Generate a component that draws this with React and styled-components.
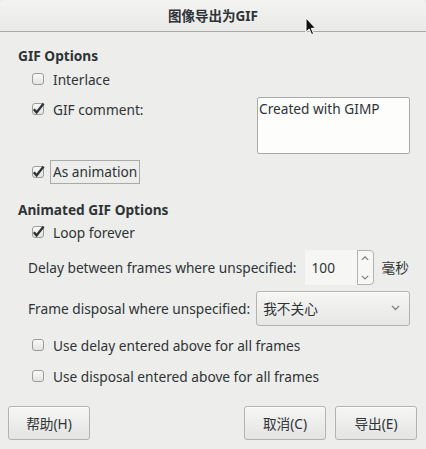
import React from 'react';
import styled, { createGlobalStyle } from 'styled-components';

const GlobalStyle = createGlobalStyle`
  html, body {
    margin: 0;
    padding: 0;
    background: #ededeb;
  }
  * { box-sizing: border-box; }
`;

const Window = styled.div`
  position: relative;
  width: 426px;
  height: 449px;
  display: flex;
  flex-direction: column;
  background: #ededeb;
  color: #2e3436;
  font-family: "Noto Sans", "Noto Sans CJK SC", sans-serif;
  font-size: 13.7px;
  overflow: hidden;
`;

const TitleBar = styled.div`
  height: 32px;
  flex: none;
  display: flex;
  align-items: center;
  justify-content: center;
  background: linear-gradient(#f3f3f2, #e9e9e7);
  border-bottom: 1px solid #a9a9a6;
  border-radius: 5px 5px 0 0;
  font-weight: bold;
  font-size: 13.5px;
  padding-bottom: 1px;
`;

const Content = styled.div`
  flex: 1;
  display: flex;
  flex-direction: column;
  padding: 15px 16px 0 18px;
`;

const Heading = styled.div`
  height: 18px;
  line-height: 18px;
  font-weight: bold;
  margin-top: ${p => p.gap || 0}px;
`;

const Row = styled.div`
  display: flex;
  align-items: ${p => p.top ? 'flex-start' : 'center'};
  height: ${p => p.h}px;
  padding-left: ${p => p.indent ?? 13}px;
`;

const CheckLabel = styled.label`
  display: flex;
  align-items: center;
  gap: 8px;
  height: ${p => p.h || 'auto'};
`;

const LabelText = styled.span`
  padding: 2px 2px;
  border: 1px solid ${p => p.focused ? '#a9a9a6' : 'transparent'};
  margin-left: -3px;
  line-height: 18px;
`;

const Spacer = styled.div`
  flex: 1;
`;

const CommentBox = styled.div`
  width: 153px;
  height: 57px;
  margin-top: 4px;
  background: #fdfdfc;
  border: 1px solid #a9a9a6;
  border-radius: 2px;
  padding: 2px 1px;
  line-height: 18px;
`;

const FieldLabel = styled.span`
  margin-right: ${p => p.gap}px;
`;

const Spin = styled.div`
  display: flex;
  height: 35px;
`;

const SpinValue = styled.div`
  width: 52px;
  background: #f6f6f5;
  display: flex;
  align-items: center;
  padding-left: 7px;
`;

const SpinButtons = styled.div`
  width: 17px;
  display: flex;
  flex-direction: column;
  align-items: center;
  justify-content: space-between;
  padding: 5px 0 4px;
  background: #f7f7f6;
  border: 1px solid #b3b3b0;
  border-radius: 0 4px 4px 0;
`;

const Unit = styled.span`
  margin-left: 8px;
`;

const Combo = styled.div`
  flex: 1;
  height: 35px;
  display: flex;
  align-items: center;
  justify-content: space-between;
  padding: 0 9px 0 6px;
  border: 1px solid #b3b3b0;
  border-radius: 3px;
  background: linear-gradient(#f6f6f5, #e6e6e4);
  box-shadow: 0 1px 0 rgba(255,255,255,0.7) inset;
`;

const Footer = styled.div`
  flex: none;
  display: flex;
  gap: 9px;
  padding: 0 9px 9px 8px;
`;

const Button = styled.div`
  width: 82px;
  height: 34px;
  display: flex;
  align-items: center;
  justify-content: center;
  border: 1px solid #b3b3b0;
  border-radius: 3px;
  background: linear-gradient(#f6f6f5, #e4e4e2);
  box-shadow: 0 1px 0 rgba(255,255,255,0.8) inset;
`;

const Cursor = styled.svg`
  position: absolute;
  left: 305px;
  top: 17px;
`;

const CheckBox = ({ checked }) => (
  <svg width="14" height="14" viewBox="0 0 14 14">
    <defs>
      <linearGradient id="cbg" x1="0" y1="0" x2="0" y2="1">
        <stop offset="0" stopColor="#fbfbfb" />
        <stop offset="1" stopColor="#e2e2e0" />
      </linearGradient>
    </defs>
    <rect x="1.5" y="1.5" width="11" height="11" rx="2.5" fill="url(#cbg)" stroke="#9c9c99" />
    {checked && (
      <path d="M2.8 7.2 L5.6 10.4 L12.6 1.6" fill="none" stroke="#2e3436" strokeWidth="2.4" strokeLinejoin="miter" />
    )}
  </svg>
);

const Chevron = ({ up, size = 8, color = '#7f8283' }) => (
  <svg width={size} height={size * 0.6} viewBox="0 0 10 6">
    <path d={up ? 'M1 5 L5 1 L9 5' : 'M1 1 L5 5 L9 1'} fill="none" stroke={color} strokeWidth="1.5" />
  </svg>
);

export default function App() {
  return (
    <>
      <GlobalStyle />
      <Window>
        <TitleBar>图像导出为GIF</TitleBar>
        <Content>
          <Heading>GIF Options</Heading>
          <Row h={28}>
            <CheckLabel><CheckBox /><span>Interlace</span></CheckLabel>
          </Row>
          <Row h={64} top>
            <CheckLabel h="32px"><CheckBox checked /><span>GIF comment:</span></CheckLabel>
            <Spacer />
            <CommentBox>Created with GIMP</CommentBox>
          </Row>
          <Row h={30}>
            <CheckLabel><CheckBox checked /><LabelText focused>As animation</LabelText></CheckLabel>
          </Row>
          <Heading gap={14}>Animated GIF Options</Heading>
          <Row h={26}>
            <CheckLabel><CheckBox checked /><span>Loop forever</span></CheckLabel>
          </Row>
          <Row h={44} indent={10}>
            <FieldLabel gap={8}>Delay between frames where unspecified:</FieldLabel>
            <Spin>
              <SpinValue>100</SpinValue>
              <SpinButtons>
                <Chevron up />
                <Chevron />
              </SpinButtons>
            </Spin>
            <Unit>毫秒</Unit>
          </Row>
          <Row h={38} indent={10}>
            <FieldLabel gap={6}>Frame disposal where unspecified:</FieldLabel>
            <Combo>
              <span>我不关心</span>
              <Chevron size={9} />
            </Combo>
          </Row>
          <Row h={36}>
            <CheckLabel><CheckBox /><span>Use delay entered above for all frames</span></CheckLabel>
          </Row>
          <Row h={26}>
            <CheckLabel><CheckBox /><span>Use disposal entered above for all frames</span></CheckLabel>
          </Row>
        </Content>
        <Footer>
          <Button>帮助(H)</Button>
          <Spacer />
          <Button>取消(C)</Button>
          <Button>导出(E)</Button>
        </Footer>
        <Cursor width="12" height="19" viewBox="0 0 12 19">
          <path d="M1 1 L1 15 L4.2 12 L6.6 17.6 L8.6 16.7 L6.3 11.3 L10.6 11.3 Z" fill="#111" stroke="#fff" strokeWidth="1" />
        </Cursor>
      </Window>
    </>
  );
}
